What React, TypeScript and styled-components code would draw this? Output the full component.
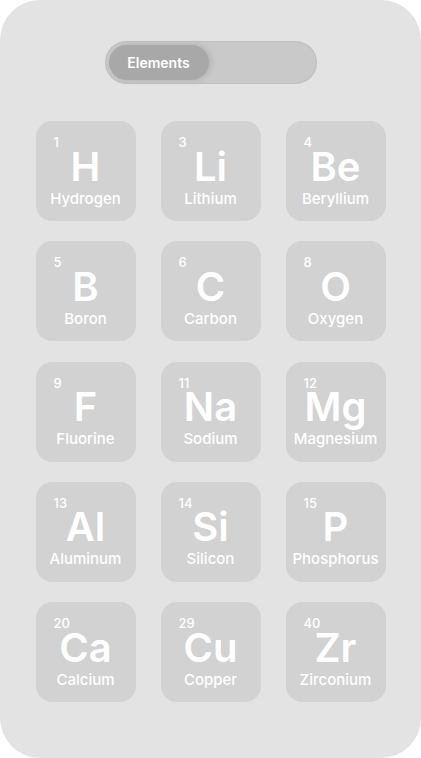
import React from "react";
import styled, { createGlobalStyle } from "styled-components";

const GlobalStyle = createGlobalStyle`
  html, body {
    margin: 0;
    padding: 0;
    background: #ffffff;
  }
  body {
    font-family: Inter, "Noto Sans", sans-serif;
  }
`;

const Frame = styled.div`
  width: 421px;
  height: 758px;
  box-sizing: border-box;
  background: #e3e3e3;
  border-radius: 40px;
  display: flex;
  flex-direction: column;
  align-items: center;
  padding-top: 41px;
  overflow: hidden;
`;

const Track = styled.div`
  width: 212px;
  height: 43px;
  box-sizing: border-box;
  border-radius: 22px;
  background: #c9c9c9;
  padding: 4px;
  display: flex;
  align-items: center;
  box-shadow: inset 0 0 2px rgba(0, 0, 0, 0.14);
`;

const Knob = styled.div`
  width: 100px;
  height: 35px;
  border-radius: 18px;
  background: #a8a8a8;
  color: #ffffff;
  font-size: 14px;
  font-weight: 600;
  display: flex;
  align-items: center;
  justify-content: center;
  box-shadow: 2px 0 6px rgba(0, 0, 0, 0.12);
`;

const Grid = styled.div`
  margin-top: 37px;
  display: grid;
  grid-template-columns: repeat(3, 100px);
  grid-auto-rows: 100px;
  column-gap: 25px;
  row-gap: 20.25px;
`;

const Tile = styled.div`
  background: #d2d2d2;
  border-radius: 16px;
  box-sizing: border-box;
  padding: 15px 0 0 18px;
  display: flex;
  flex-direction: column;
  color: #ffffff;
`;

const Num = styled.div`
  font-size: 13px;
  line-height: 13px;
  font-weight: 500;
  align-self: flex-start;
`;

const Symbol = styled.div`
  margin: 2.5px 0 0 -18px;
  font-size: 40px;
  line-height: 30px;
  font-weight: 600;
  text-align: center;
`;

const Name = styled.div`
  margin: 8px 0 0 -18px;
  font-size: 15px;
  line-height: 18px;
  font-weight: 500;
  text-align: center;
  white-space: nowrap;
`;

const elements: [number, string, string][] = [
  [1, "H", "Hydrogen"],
  [3, "Li", "Lithium"],
  [4, "Be", "Beryllium"],
  [5, "B", "Boron"],
  [6, "C", "Carbon"],
  [8, "O", "Oxygen"],
  [9, "F", "Fluorine"],
  [11, "Na", "Sodium"],
  [12, "Mg", "Magnesium"],
  [13, "Al", "Aluminum"],
  [14, "Si", "Silicon"],
  [15, "P", "Phosphorus"],
  [20, "Ca", "Calcium"],
  [29, "Cu", "Copper"],
  [40, "Zr", "Zirconium"],
];

export default function App() {
  return (
    <>
      <GlobalStyle />
      <Frame>
        <Track>
          <Knob>Elements</Knob>
        </Track>
        <Grid>
          {elements.map(([n, s, name]) => (
            <Tile key={n}>
              <Num>{n}</Num>
              <Symbol>{s}</Symbol>
              <Name>{name}</Name>
            </Tile>
          ))}
        </Grid>
      </Frame>
    </>
  );
}
